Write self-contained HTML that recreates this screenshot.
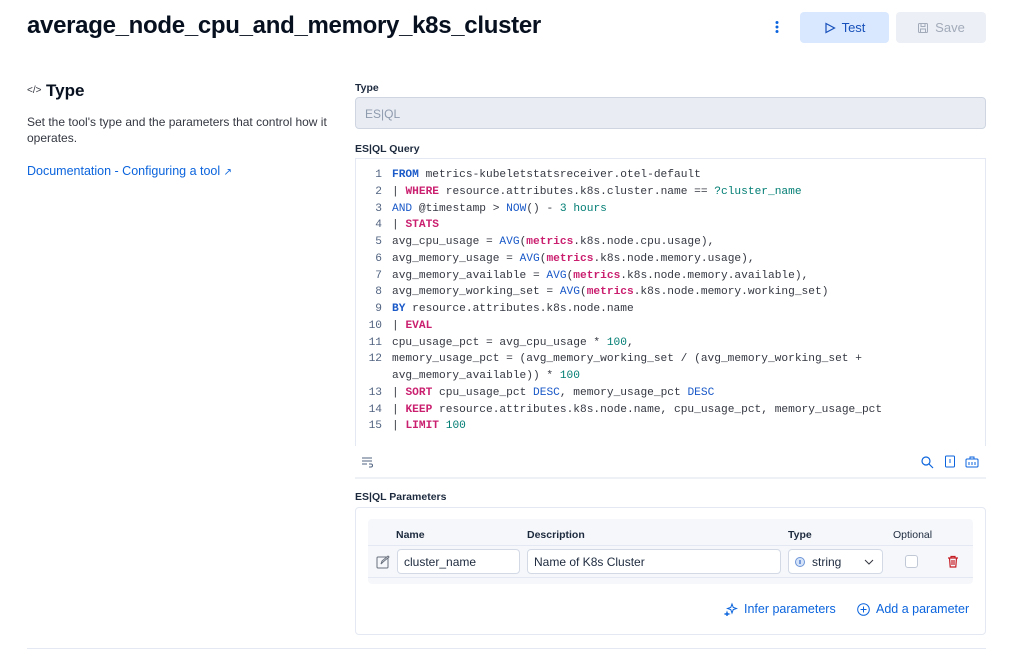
<!DOCTYPE html>
<html><head><meta charset="utf-8"><style>
*{box-sizing:border-box;margin:0;padding:0}
body{width:1020px;height:656px;background:#fff;font-family:"Liberation Sans",sans-serif;color:#1d2a3e;position:relative;overflow:hidden}
.a{position:absolute}
h1{position:absolute;left:27px;top:12px;font-size:24px;font-weight:700;color:#07101f;letter-spacing:-0.3px}
.btn{position:absolute;top:12px;height:31px;border-radius:4px;font-size:13px;display:flex;align-items:center;justify-content:center;gap:6px;font-weight:500}
.lbl{position:absolute;font-size:10.5px;font-weight:700;color:#1d2a3e}
.code{position:absolute;left:355px;top:158px;width:631px;height:288px;border:1px solid #e3e8f2;border-bottom:none}
.ln{position:absolute;left:0;width:26px;text-align:right;color:#516381}
.row{position:absolute;left:36px;white-space:pre;color:#343741}
.code div{font-family:"Liberation Mono",monospace;font-size:11.2px;line-height:16.75px}
.k{color:#ca1f6f;font-weight:700}.b{color:#1a59c8}.bb{color:#1a59c8;font-weight:700}.g{color:#017d73}
.inp{position:absolute;height:25px;border:1px solid #d3dae6;border-radius:4px;background:#fff;font-size:12px;padding-left:6px;display:flex;align-items:center;color:#1d2a3e}
.th{position:absolute;top:529px;font-size:10.5px;font-weight:700}
.link{color:#0b64dd;font-weight:500;font-size:12.5px;display:flex;align-items:center;gap:6px}
</style></head><body>
<h1>average_node_cpu_and_memory_k8s_cluster</h1>
<svg class="a" style="left:774px;top:20px" width="6" height="14"><circle cx="3" cy="2.5" r="1.5" fill="#0b64dd"/><circle cx="3" cy="7" r="1.5" fill="#0b64dd"/><circle cx="3" cy="11.5" r="1.5" fill="#0b64dd"/></svg>
<div class="btn" style="left:800px;width:89px;background:#d9e8ff;color:#1750ba"><svg width="12" height="12"><path d="M2 1.5 L10.5 6 L2 10.5 Z" fill="none" stroke="#1750ba" stroke-width="1.2"/></svg>Test</div>
<div class="btn" style="left:896px;width:90px;background:#eceff5;color:#a2abba"><svg width="12" height="12"><rect x="1.5" y="1.5" width="9" height="9" rx="1" fill="none" stroke="#a2abba"/><rect x="4" y="1.5" width="4" height="3" fill="none" stroke="#a2abba"/><rect x="3.5" y="7" width="5" height="3.5" fill="none" stroke="#a2abba"/></svg>Save</div>

<div class="a" style="left:27px;top:85px;font-size:10px;color:#343741">&lt;/&gt;</div>
<div class="a" style="left:46px;top:81px;font-size:17px;font-weight:700;color:#07101f">Type</div>
<div class="a" style="left:27px;top:114px;width:310px;font-size:12px;line-height:16px;color:#343741">Set the tool's type and the parameters that control how it operates.</div>
<div class="a" style="left:27px;top:164px;font-size:12.5px;color:#0b64dd">Documentation - Configuring a tool <span style="font-size:10px">↗</span></div>

<div class="lbl" style="left:355px;top:82px">Type</div>
<div class="a" style="left:355px;top:97px;width:631px;height:32px;background:#e9edf3;border:1px solid #cfd6e2;border-radius:4px;font-size:12px;color:#8e9aae;padding:9px 9px">ES|QL</div>
<div class="lbl" style="left:355px;top:143px">ES|QL Query</div>
<div class="code">
<div class="ln" style="top:8px">1<br>2<br>3<br>4<br>5<br>6<br>7<br>8<br>9<br>10<br>11<br>12<br><br>13<br>14<br>15</div>
<div class="row" style="top:8px"><span class="bb">FROM</span> metrics-kubeletstatsreceiver.otel-default
| <span class="k">WHERE</span> resource.attributes.k8s.cluster.name == <span class="g">?cluster_name</span>
<span class="b">AND</span> @timestamp &gt; <span class="b">NOW</span>() - <span class="g">3 hours</span>
| <span class="k">STATS</span>
avg_cpu_usage = <span class="b">AVG</span>(<span class="k">metrics</span>.k8s.node.cpu.usage),
avg_memory_usage = <span class="b">AVG</span>(<span class="k">metrics</span>.k8s.node.memory.usage),
avg_memory_available = <span class="b">AVG</span>(<span class="k">metrics</span>.k8s.node.memory.available),
avg_memory_working_set = <span class="b">AVG</span>(<span class="k">metrics</span>.k8s.node.memory.working_set)
<span class="bb">BY</span> resource.attributes.k8s.node.name
| <span class="k">EVAL</span>
cpu_usage_pct = avg_cpu_usage * <span class="g">100</span>,
memory_usage_pct = (avg_memory_working_set / (avg_memory_working_set +
avg_memory_available)) * <span class="g">100</span>
| <span class="k">SORT</span> cpu_usage_pct <span class="b">DESC</span>, memory_usage_pct <span class="b">DESC</span>
| <span class="k">KEEP</span> resource.attributes.k8s.node.name, cpu_usage_pct, memory_usage_pct
| <span class="k">LIMIT</span> <span class="g">100</span></div>
</div>
<svg class="a" style="left:361px;top:456px" width="12" height="12"><path d="M1 2h10M1 5h10M1 8h5M8 8h2a1.5 1.5 0 010 3H8" fill="none" stroke="#516381" stroke-width="1"/></svg>
<svg class="a" style="left:920px;top:455px" width="14" height="14"><circle cx="6" cy="6" r="4" fill="none" stroke="#0b64dd" stroke-width="1.2"/><path d="M9 9l4 4" stroke="#0b64dd" stroke-width="1.2"/></svg>
<svg class="a" style="left:944px;top:455px" width="12" height="14"><rect x="1.5" y="1" width="9" height="11" rx="1" fill="none" stroke="#0b64dd"/><path d="M6 4v4" stroke="#0b64dd"/></svg>
<svg class="a" style="left:965px;top:455px" width="14" height="14"><rect x="1" y="4" width="12" height="8" rx="1" fill="none" stroke="#0b64dd"/><path d="M4 7v3M7 7v3M10 7v3M5 4V2h4v2" fill="none" stroke="#0b64dd"/></svg>
<div class="a" style="left:355px;top:477px;width:631px;height:2px;background:#eef1f6"></div>

<div class="lbl" style="left:355px;top:491px">ES|QL Parameters</div>
<div class="a" style="left:355px;top:507px;width:631px;height:128px;border:1px solid #e3e8f2;border-radius:4px"></div>
<div class="a" style="left:368px;top:519px;width:605px;height:65px;background:#f5f7fa;border-radius:4px"></div>
<div class="a" style="left:368px;top:545px;width:605px;height:1px;background:#e3e8f2"></div>
<div class="a" style="left:368px;top:577px;width:605px;height:1px;background:#e3e8f2"></div>
<div class="th" style="left:396px">Name</div>
<div class="th" style="left:527px">Description</div>
<div class="th" style="left:788px">Type</div>
<div class="th" style="left:893px;font-weight:500">Optional</div>
<svg class="a" style="left:376px;top:555px" width="14" height="14"><rect x="1" y="2" width="11" height="11" rx="1" fill="none" stroke="#69707d"/><path d="M5 9l1-3 6-5 1 1-6 5z" fill="#fff" stroke="#69707d"/></svg>
<div class="inp" style="left:397px;top:549px;width:123px">cluster_name</div>
<div class="inp" style="left:527px;top:549px;width:254px">Name of K8s Cluster</div>
<div class="inp" style="left:788px;top:549px;width:95px"><svg width="10" height="10" style="margin-right:7px"><circle cx="5" cy="5" r="4.5" fill="#d6e4fa" stroke="#6c94d6"/><path d="M5 3v4" stroke="#1750ba"/></svg>string<svg width="10" height="6" style="position:absolute;right:8px"><path d="M1 1l4 4 4-4" fill="none" stroke="#343741"/></svg></div>
<div class="a" style="left:905px;top:555px;width:13px;height:13px;border:1px solid #c2c9d6;border-radius:3px;background:#fff"></div>
<svg class="a" style="left:947px;top:555px" width="12" height="13"><path d="M1 3h10M4 3V1.5h4V3M2.5 3l.7 9h5.6l.7-9M5 5v5M7 5v5" fill="none" stroke="#c61e25" stroke-width="1.2"/></svg>
<div class="a link" style="left:724px;top:602px"><svg width="14" height="14"><path d="M8 2l1.2 3.3L12.5 6.5 9.2 7.7 8 11 6.8 7.7 3.5 6.5 6.8 5.3z M3 10l.5 1.5L5 12l-1.5.5L3 14l-.5-1.5L1 12l1.5-.5z" fill="none" stroke="#0b64dd"/></svg>Infer parameters</div>
<div class="a link" style="left:857px;top:602px"><svg width="13" height="13"><circle cx="6.5" cy="6.5" r="5.8" fill="none" stroke="#0b64dd"/><path d="M6.5 3.5v6M3.5 6.5h6" stroke="#0b64dd"/></svg>Add a parameter</div>
<div class="a" style="left:27px;top:648px;width:959px;height:1px;background:#e3e8f2"></div>
</body></html>
